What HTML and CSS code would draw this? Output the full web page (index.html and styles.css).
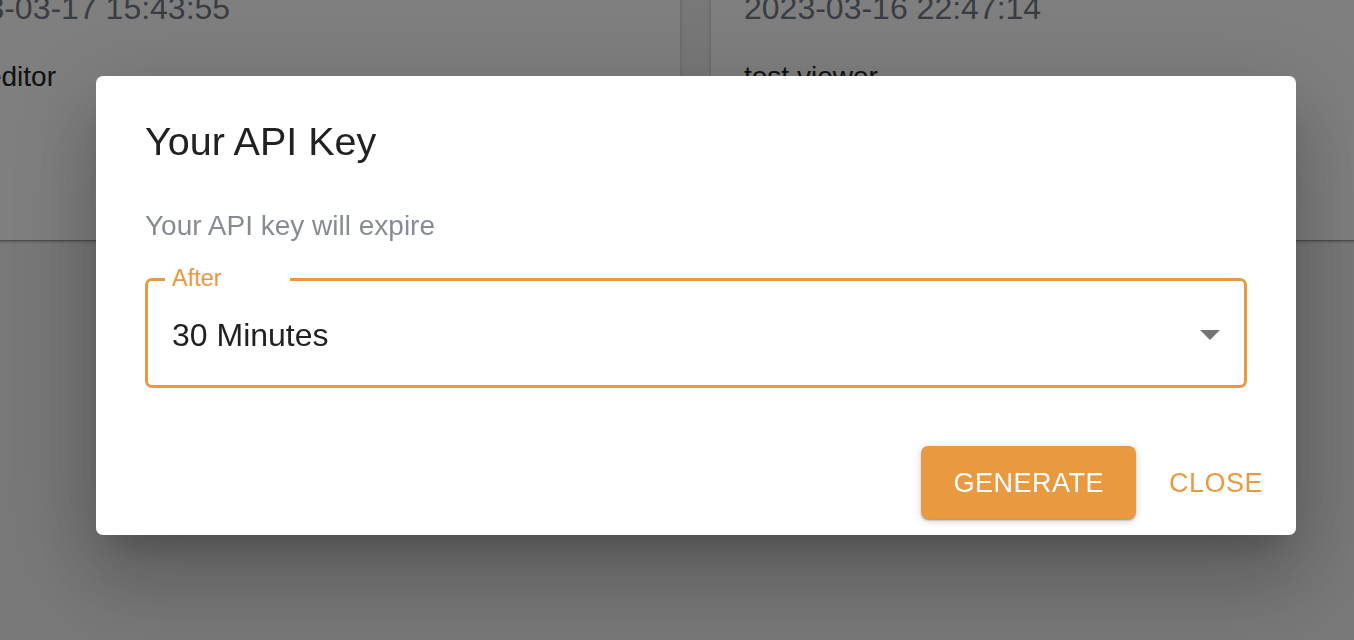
FILE: index.html
```html
<!DOCTYPE html>
<html lang="en">
<head>
<meta charset="utf-8">
<title>Your API Key</title>
<link rel="stylesheet" href="styles.css">
</head>
<body>
<main class="page">
  <div class="cards">
    <section class="card">
      <div class="card-date">2023-03-17 15:43:55</div>
      <div class="card-name">test editor</div>
    </section>
    <section class="card">
      <div class="card-date">2023-03-16 22:47:14</div>
      <div class="card-name">test viewer</div>
    </section>
  </div>
</main>

<div class="backdrop">
  <div class="dialog" role="dialog" aria-labelledby="dlg-title">
    <h2 class="dialog-title" id="dlg-title">Your API Key</h2>
    <div class="dialog-content">
      <p class="dialog-text">Your API key will expire</p>
      <div class="field">
        <span class="field-label">After</span>
        <span class="field-value">30 Minutes</span>
        <svg class="field-arrow" width="20" height="10" viewBox="0 0 20 10" aria-hidden="true">
          <path d="M0 0 L20 0 L10 10 Z" fill="#757575"/>
        </svg>
      </div>
    </div>
    <div class="dialog-actions">
      <button class="btn btn-contained" type="button">GENERATE</button>
      <button class="btn btn-text" type="button">CLOSE</button>
    </div>
  </div>
</div>
</body>
</html>
```

FILE: styles.css
```css
html, body {
  margin: 0;
  padding: 0;
  height: 100%;
  overflow: hidden;
}

body {
  background: #f0f0f0;
  font-family: "Liberation Sans", Arial, Helvetica, sans-serif;
}

.page {
  width: 100%;
  height: 100%;
}

.cards {
  display: flex;
  gap: 31px;
  margin-left: -100px;
  margin-top: -40px;
}

.card {
  flex: 0 0 780px;
  box-sizing: border-box;
  background: #ffffff;
  padding: 28px 33px 145px;
  box-shadow: 0 2px 2px rgba(0, 0, 0, 0.14), 0 1px 5px rgba(0, 0, 0, 0.12), 0 3px 1px -2px rgba(0, 0, 0, 0.2);
}

.card-date {
  font-size: 32px;
  line-height: 40px;
  color: #747a86;
  white-space: nowrap;
}

.card-name {
  margin-top: 31px;
  font-size: 28px;
  line-height: 36px;
  color: #222222;
  white-space: nowrap;
}

.backdrop {
  position: fixed;
  inset: 0;
  background: rgba(0, 0, 0, 0.5);
  display: flex;
  align-items: flex-start;
  justify-content: flex-start;
  padding: 76px 0 0 96px;
}

.dialog {
  width: 1200px;
  background: #ffffff;
  border-radius: 7px;
  box-shadow:
    0 22px 30px -14px rgba(0, 0, 0, 0.2),
    0 48px 76px 6px rgba(0, 0, 0, 0.14),
    0 18px 92px 16px rgba(0, 0, 0, 0.12);
}

.dialog-title {
  margin: 0;
  padding: 41px 49px 0;
  font-size: 39.5px;
  line-height: 48px;
  font-weight: 400;
  color: #212121;
}

.dialog-content {
  padding: 41px 49px 42px;
}

.dialog-text {
  margin: 0;
  font-size: 28px;
  line-height: 40px;
  color: #878c94;
}

.field {
  position: relative;
  margin-top: 32px;
  height: 110px;
  box-sizing: border-box;
  border: 3px solid #e99940;
  border-radius: 7px;
  padding: 0 24px;
  display: flex;
  align-items: center;
  justify-content: space-between;
}

.field-label {
  position: absolute;
  top: -17px;
  left: 17px;
  padding: 0 68px 0 7px;
  background: #ffffff;
  font-size: 23.5px;
  line-height: 28px;
  color: #e99940;
}

.field-value {
  margin-top: 4px;
  font-size: 32px;
  line-height: 40px;
  color: #212121;
}

.field-arrow {
  display: block;
  margin-top: 4px;
}

.dialog-actions {
  display: flex;
  justify-content: flex-end;
  align-items: center;
  gap: 16px;
  padding: 16px;
}

.btn {
  font-family: "Liberation Sans", Arial, Helvetica, sans-serif;
  font-size: 27px;
  letter-spacing: 0.5px;
  height: 73px;
  border: 0;
  border-radius: 7px;
  cursor: pointer;
  padding-top: 2px;
}

.btn-contained {
  padding-left: 32px;
  padding-right: 32px;
  background: #e99940;
  color: #ffffff;
  box-shadow: 0 3px 1px -2px rgba(0, 0, 0, 0.2), 0 2px 2px 0 rgba(0, 0, 0, 0.14), 0 2px 8px 0 rgba(0, 0, 0, 0.16);
}

.btn-text {
  padding-left: 17px;
  padding-right: 17px;
  background: transparent;
  color: #e99940;
}
```
